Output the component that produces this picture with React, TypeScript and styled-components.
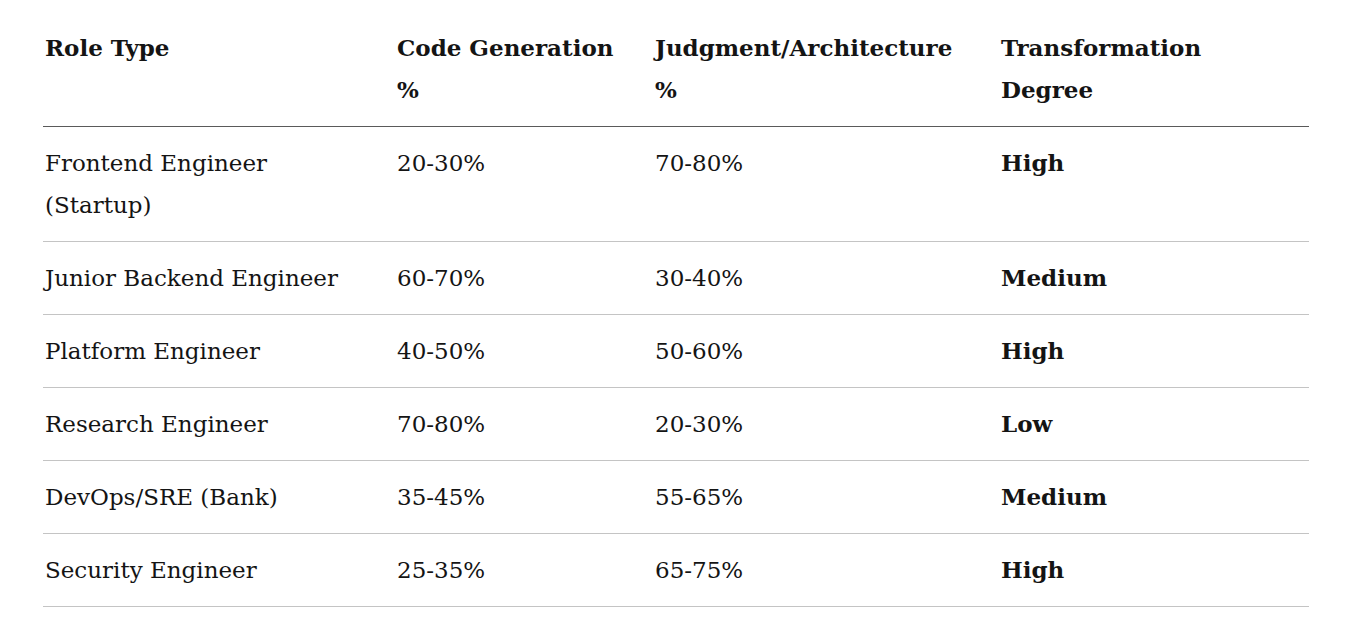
import React from "react";
import styled, { createGlobalStyle } from "styled-components";

const Global = createGlobalStyle`
  html, body { margin: 0; padding: 0; background: #ffffff; }
  body { font-family: "DejaVu Serif", "Liberation Serif", serif; color: #141414; }
`;

const Page = styled.div`
  padding: 12px 0 0 43px;
`;

const Table = styled.table`
  width: 1266px;
  border-collapse: collapse;
  table-layout: fixed;
  font-size: 23px;
  line-height: 42.5px;
`;

const HeadCell = styled.th<{ $w: number }>`
  box-sizing: border-box;
  width: ${(p) => p.$w}px;
  text-align: left;
  vertical-align: top;
  font-weight: 700;
  padding: 14.5px 24px 14.5px 2px;
  border-bottom: 1px solid #5a5a5a;
`;

const Row = styled.tr`
  border-bottom: 1px solid #c4c4c4;
`;

const Cell = styled.td<{ $strong?: boolean }>`
  box-sizing: border-box;
  vertical-align: top;
  padding: 14.7px 24px 14.7px 2px;
  font-weight: ${(p) => (p.$strong ? 700 : 400)};
`;

const columns = [
  { label: "Role Type", w: 352 },
  { label: "Code Generation %", w: 258 },
  { label: "Judgment/Architecture %", w: 346 },
  { label: "Transformation Degree", w: 310 },
];

const rows = [
  ["Frontend Engineer (Startup)", "20-30%", "70-80%", "High"],
  ["Junior Backend Engineer", "60-70%", "30-40%", "Medium"],
  ["Platform Engineer", "40-50%", "50-60%", "High"],
  ["Research Engineer", "70-80%", "20-30%", "Low"],
  ["DevOps/SRE (Bank)", "35-45%", "55-65%", "Medium"],
  ["Security Engineer", "25-35%", "65-75%", "High"],
];

export default function App() {
  return (
    <>
      <Global />
      <Page>
        <Table>
          <thead>
            <tr>
              {columns.map((c) => (
                <HeadCell key={c.label} $w={c.w}>
                  {c.label}
                </HeadCell>
              ))}
            </tr>
          </thead>
          <tbody>
            {rows.map((r) => (
              <Row key={r[0]}>
                <Cell>{r[0]}</Cell>
                <Cell>{r[1]}</Cell>
                <Cell>{r[2]}</Cell>
                <Cell $strong>{r[3]}</Cell>
              </Row>
            ))}
          </tbody>
        </Table>
      </Page>
    </>
  );
}
